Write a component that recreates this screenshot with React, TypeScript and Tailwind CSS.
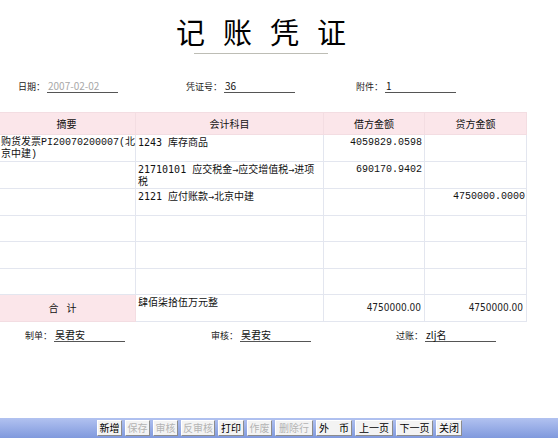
const cjk = '"Noto Sans CJK SC", "Liberation Sans", sans-serif';
const mono = '"Liberation Mono", "Noto Sans CJK SC", monospace';
// DejaVu carries the → glyph used in account paths
const acct = '"DejaVu Sans Mono", "Noto Sans CJK SC", monospace';

type Row = { summary: string; account: string; debit: string; credit: string; h: string };

const rows: Row[] = [
  { summary: '购货发票PI20070200007(北京中建)', account: '1243 库存商品', debit: '4059829.0598', credit: '', h: 'h-[27px]' },
  { summary: '', account: '21710101 应交税金→应交增值税→进项税', debit: '690170.9402', credit: '', h: 'h-[26px]' },
  { summary: '', account: '2121 应付账款→北京中建', debit: '', credit: '4750000.0000', h: 'h-[27px]' },
  { summary: '', account: '', debit: '', credit: '', h: 'h-[26px]' },
  { summary: '', account: '', debit: '', credit: '', h: 'h-[27px]' },
  { summary: '', account: '', debit: '', credit: '', h: 'h-[26px]' },
];

const buttons = [
  { label: '新增', w: 'w-[25px]', on: true },
  { label: '保存', w: 'w-[25px]', on: false },
  { label: '审核', w: 'w-[25px]', on: false },
  { label: '反审核', w: 'w-[34px]', on: false },
  { label: '打印', w: 'w-[26px]', on: true },
  { label: '作废', w: 'w-[25px]', on: false },
  { label: '删除行', w: 'w-[38px]', on: false },
  { label: '外　币', w: 'w-[36px]', on: true },
  { label: '上一页', w: 'w-[38px]', on: true },
  { label: '下一页', w: 'w-[37px]', on: true },
  { label: '关闭', w: 'w-[26px]', on: true },
];

function Field({ label, value, className, valueClass }: { label: string; value: string; className: string; valueClass?: string }) {
  return (
    <div className={`absolute flex items-end ${className}`}>
      <span className="text-[9px] leading-[12px] text-[#222]">{label}</span>
      <span className={`ml-[2px] w-[71px] border-b border-[#555] pl-[1px] text-[10px] leading-[12px] ${valueClass ?? 'text-[#111]'}`}>
        {value}
      </span>
    </div>
  );
}

export default function App() {
  const cell = 'border border-[#e3e6ef] align-top';
  const sum = '"DejaVu Sans Condensed", "Liberation Sans", sans-serif';
  return (
    <div className="relative h-[438px] w-[558px] overflow-hidden bg-white" style={{ fontFamily: cjk }}>
      {/* title */}
      <div className="ml-[-3px] w-[528px] pt-[13px]">
        <div className="flex justify-center gap-[18px] text-[29px] leading-[36px] text-black" style={{ fontFamily: '"Noto Sans CJK SC", serif' }}>
          <span>记</span>
          <span>账</span>
          <span>凭</span>
          <span>证</span>
        </div>
        <div className="mx-auto mt-[4px] h-[1px] w-[134px] bg-[#bdbdb5]" />
      </div>

      {/* header fields */}
      <div className="relative h-[58px]">
        <Field label="日期：" value="2007-02-02" className="left-[18px] top-[26px]" valueClass="text-[#a8a8a8]" />
        <Field label="凭证号：" value="36" className="left-[186px] top-[26px]" />
        <Field label="附件：" value="1" className="left-[356px] top-[26px]" />
      </div>

      {/* voucher lines */}
      <table className="ml-[-3px] w-[529px] table-fixed border-collapse text-[10px] leading-[12px] text-[#111]">
        <colgroup>
          <col className="w-[138px]" />
          <col className="w-[188px]" />
          <col className="w-[101px]" />
          <col className="w-[102px]" />
        </colgroup>
        <thead>
          <tr className="h-[22px] bg-[#fbe6ea]">
            <th className="border border-[#f3dde2] font-normal">摘要</th>
            <th className="border border-[#f3dde2] font-normal">会计科目</th>
            <th className="border border-[#f3dde2] font-normal">借方金额</th>
            <th className="border border-[#f3dde2] font-normal">贷方金额</th>
          </tr>
        </thead>
        <tbody>
          {rows.map((r, i) => (
            <tr key={i} className={r.h}>
              <td className={`${cell} break-all pl-[3px] pt-[2px]`} style={{ fontFamily: mono }}>{r.summary}</td>
              <td className={`${cell} break-all pl-[2px] pt-[2px]`} style={{ fontFamily: acct }}>{r.account}</td>
              <td className={`${cell} pr-[2px] pt-[2px] text-right`} style={{ fontFamily: mono }}>{r.debit}</td>
              <td className={`${cell} pr-[1px] pt-[2px] text-right`} style={{ fontFamily: mono }}>{r.credit}</td>
            </tr>
          ))}
          <tr className="h-[27px]">
            <td className="border border-[#f3dde2] bg-[#fbe6ea] text-center align-middle tracking-[8px]">合计</td>
            <td className={`${cell} pl-[2px] pt-[1px]`}>肆佰柒拾伍万元整</td>
            <td className="border border-[#e3e6ef] pr-[3px] text-right align-middle text-[#222]" style={{ fontFamily: sum }}>4750000.00</td>
            <td className="border border-[#e3e6ef] pr-[3px] text-right align-middle text-[#222]" style={{ fontFamily: sum }}>4750000.00</td>
          </tr>
        </tbody>
      </table>

      {/* signatures */}
      <div className="relative h-[40px]">
        <Field label="制单：" value="吴君安" className="left-[25px] top-[7px]" />
        <Field label="审核：" value="吴君安" className="left-[211px] top-[7px]" />
        <Field label="过账：" value="zlj名" className="left-[396px] top-[7px]" />
      </div>

      {/* toolbar */}
      <div className="absolute bottom-0 left-0 flex h-[20px] w-[558px] items-center gap-[3px] bg-gradient-to-b from-[#b2c2f0] to-[#8099dd] pl-[97px]">
        {buttons.map((b) => (
          <div
            key={b.label}
            className={`flex h-[16px] ${b.w} items-center justify-center border border-t-[#ffffff] border-l-[#ffffff] border-r-[#8c8c8c] border-b-[#8c8c8c] bg-[#f3f3f3] text-[10px] leading-none ${b.on ? 'text-black' : 'text-[#b4b4b4]'}`}
          >
            {b.label}
          </div>
        ))}
      </div>
    </div>
  );
}
